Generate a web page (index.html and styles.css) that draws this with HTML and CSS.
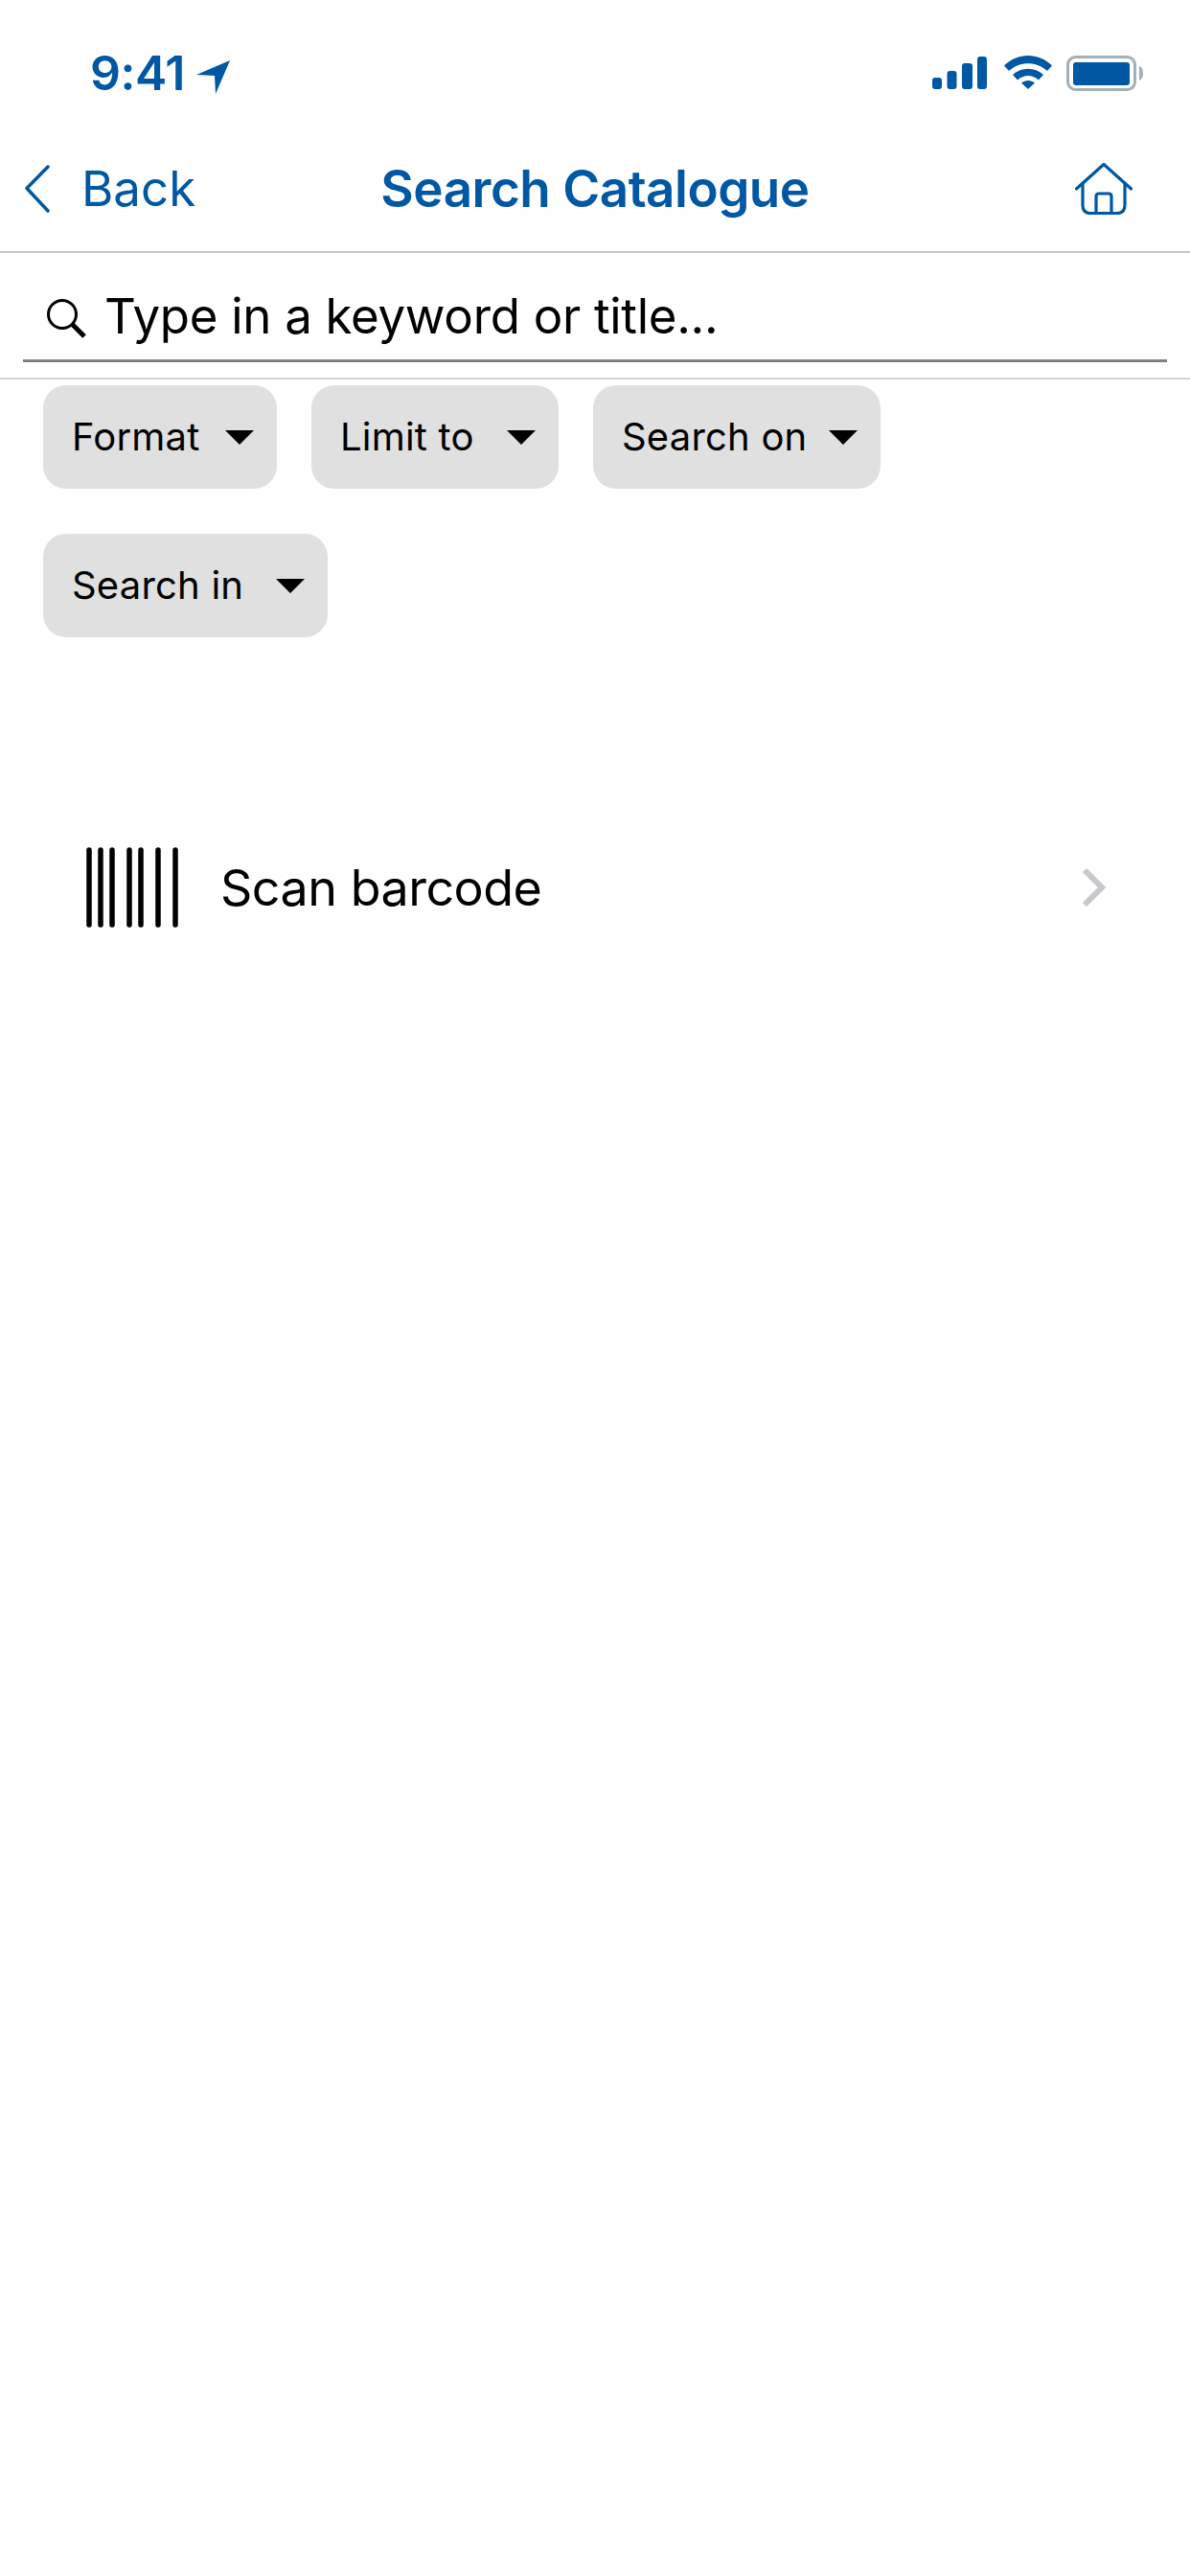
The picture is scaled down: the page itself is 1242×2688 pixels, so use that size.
FILE: index.html
```html
<!DOCTYPE html>
<html lang="en">
<head>
<meta charset="utf-8">
<title>Search Catalogue</title>
<link rel="stylesheet" href="styles.css">
</head>
<body>
<div class="screen">
  <div class="status">
    <div class="status-left">
      <span class="time">9:41</span>
      <svg class="locate" viewBox="0 0 35 35"><path d="M0 15 35 0 20 35 19 16Z"/></svg>
    </div>
    <div class="status-right">
      <svg class="signal" viewBox="0 0 57 34"><rect x="0" y="22" width="10" height="12" rx="3"/><rect x="15.500" y="15" width="10" height="19" rx="3"/><rect x="31" y="7" width="11" height="27" rx="3"/><rect x="47" y="0" width="10" height="34" rx="3"/></svg>
      <svg class="wifi" viewBox="0 0 50 35"><path d="M0 10.500C14-3.500 36-3.500 50 10.500L45 16C34 5.500 16 5.500 5 16Z"/><path d="M9 20C18 11.500 32 11.500 41 20L36 25.500C29.500 19.500 20.500 19.500 14 25.500Z"/><path d="M18 28.500C22 25 28 25 32 28.500L25 35Z"/></svg>
      <svg class="battery" viewBox="0 0 80 37"><rect class="battery-case" x="1.500" y="1.500" width="70" height="34" rx="8"/><rect class="battery-level" x="7" y="7" width="59" height="24" rx="3"/><path class="battery-nub" d="M76 11C79 12 80 15 80 18.500 80 22 79 25 76 26Z"/></svg>
    </div>
  </div>

  <nav class="nav">
    <a class="back">
      <svg class="back-chevron" viewBox="0 0 26 50"><path d="M24 2 2 24.500 24 48"/></svg>
      <span>Back</span>
    </a>
    <h1 class="title">Search Catalogue</h1>
    <svg class="home" viewBox="0 0 60 54"><path d="M1.500 27 30 1.500 58.500 27"/><path d="M8 21V44Q8 52.500 16 52.500H44Q52 52.500 52 44V21"/><path d="M22 52.500V35Q22 32 25 32H35Q38 32 38 35V52.500"/></svg>
  </nav>

  <div class="search">
    <div class="search-field">
      <svg class="search-icon" viewBox="0 0 42 42"><circle cx="17" cy="17" r="14.500"/><path class="search-handle" d="M27.500 27.500 40 40"/></svg>
      <span class="search-text">Type in a keyword or title...</span>
    </div>
  </div>

  <div class="filters">
    <button class="chip chip-format">Format<i class="caret"></i></button>
    <button class="chip chip-limit">Limit to<i class="caret"></i></button>
    <button class="chip chip-on">Search on<i class="caret"></i></button>
    <button class="chip chip-in">Search in<i class="caret"></i></button>
  </div>

  <div class="scan-row">
    <svg class="barcode" viewBox="0 0 98 84"><path d="M3 3V81M15 3V81M27 3V81M45 3V81M57 3V81M75 3V81M93 3V81"/></svg>
    <span class="scan-label">Scan barcode</span>
    <svg class="row-chevron" viewBox="0 0 26 42"><path d="M3 3 21 21 3 39"/></svg>
  </div>
</div>
</body>
</html>
```
FILE: styles.css
```css
* { box-sizing: border-box; }

html, body { margin: 0; background: #fff; }

.screen {
  width: 1242px;
  height: 2688px;
  font-family: Inter, "Liberation Sans", sans-serif;
  color: #000;
  overflow: hidden;
}

.status {
  height: 121px;
  display: flex;
  justify-content: space-between;
  padding: 58px 49px 0 94px;
  color: #0057a4;
}

.status-left { display: flex; align-items: flex-start; gap: 12px; }

.time {
  font-size: 50px;
  font-weight: 600;
  line-height: 37px;
  letter-spacing: -0.5px;
}

.locate { width: 35px; height: 35px; margin-top: 5px; fill: #0057a4; }

.status-right { display: flex; align-items: flex-start; }

.signal { width: 57px; height: 34px; fill: #0057a4; margin-top: 1px; }
.wifi { width: 50px; height: 35px; fill: #0057a4; margin-left: 18px; }
.battery { width: 80px; height: 37px; margin-left: 15px; }

.battery-case { fill: none; stroke: #a5aebb; stroke-width: 3; }
.battery-level { fill: #0057a4; }
.battery-nub { fill: #a5aebb; }

/* Back and home take equal side tracks so the title sits on the page centre */
.nav {
  height: 143px;
  display: grid;
  grid-template-columns: 1fr auto 1fr;
  align-items: center;
  padding: 10px 26px 0;
  border-bottom: 2px solid #c8c8c8;
  color: #0057a4;
}

.back {
  display: flex;
  align-items: center;
  gap: 33px;
  font-size: 51px;
}

.back-chevron {
  width: 26px;
  height: 50px;
  fill: none;
  stroke: #0057a4;
  stroke-width: 3.500;
  stroke-linecap: round;
  stroke-linejoin: round;
}

.title {
  margin: 0;
  font-size: 53px;
  font-weight: 600;
  letter-spacing: -0.500px;
}

.home {
  justify-self: end;
  width: 60px;
  height: 54px;
  margin-right: 34px;
  fill: none;
  stroke: #0057a4;
  stroke-width: 3.200;
  stroke-linecap: round;
  stroke-linejoin: round;
}

.search {
  height: 132px;
  padding: 0 24px 16px;
  border-bottom: 2px solid #d0d0d0;
}

.search-field {
  height: 114px;
  display: flex;
  align-items: center;
  gap: 19px;
  padding: 24px 0 0 24px;
  border-bottom: 3px solid #7f7f7f;
  font-size: 51px;
  letter-spacing: -0.300px;
}

.search-text { padding-bottom: 4px; }

.search-icon {
  width: 42px;
  height: 42px;
  fill: none;
  stroke: #000;
  stroke-width: 3;
}

.search-handle { stroke-width: 5; }

.filters {
  display: flex;
  flex-wrap: wrap;
  gap: 47px 36px;
  padding: 6px 0 0 45px;
}

.chip {
  height: 108px;
  display: flex;
  align-items: center;
  justify-content: space-between;
  padding: 0 24px 2px 30px;
  border: 0;
  border-radius: 24px;
  background: #e0e0e0;
  font: inherit;
  font-size: 40px;
  letter-spacing: 0.200px;
  color: #000;
}

.chip-format { width: 244px; }
.chip-limit { width: 258px; }
.chip-on { width: 300px; }
.chip-in { width: 297px; flex: none; }

.caret {
  width: 0;
  height: 0;
  margin-top: 2px;
  border-left: 15px solid transparent;
  border-right: 15px solid transparent;
  border-top: 15px solid #000;
}

.scan-row {
  display: flex;
  align-items: center;
  margin-top: 219px;
  padding: 0 87px 0 90px;
}

.barcode {
  width: 98px;
  height: 84px;
  fill: none;
  stroke: #000;
  stroke-width: 5.500;
  stroke-linecap: round;
}

.scan-label { flex: 1; margin-left: 42px; font-size: 52px; letter-spacing: -0.500px; }

.row-chevron {
  width: 26px;
  height: 42px;
  fill: none;
  stroke: #c7c7cc;
  stroke-width: 6;
}
```
